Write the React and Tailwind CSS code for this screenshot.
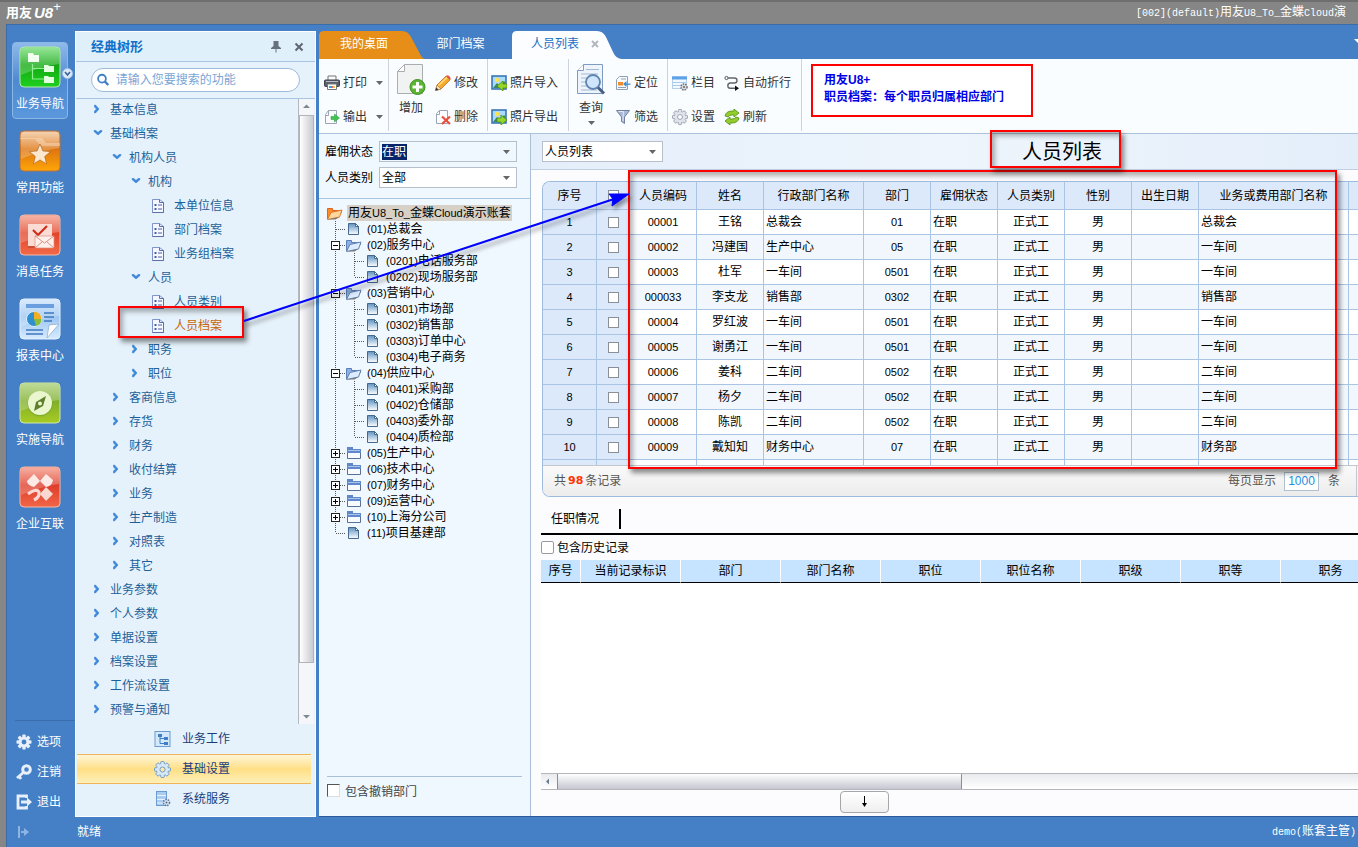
import { useState } from 'react';
import clsx from 'clsx';

const MENU = [
  { label: '基本信息', level: 0 },
  { label: '基础档案', level: 0, open: true },
  { label: '机构人员', level: 1, open: true },
  { label: '机构', level: 2, open: true },
  { label: '本单位信息', level: 3 },
  { label: '部门档案', level: 3 },
  { label: '业务组档案', level: 3 },
  { label: '人员', level: 2, open: true },
  { label: '人员类别', level: 3 },
  { label: '人员档案', level: 3, active: true },
  { label: '职务', level: 2 },
  { label: '职位', level: 2 },
  { label: '客商信息', level: 1 },
  { label: '存货', level: 1 },
  { label: '财务', level: 1 },
  { label: '收付结算', level: 1 },
  { label: '业务', level: 1 },
  { label: '生产制造', level: 1 },
  { label: '对照表', level: 1 },
  { label: '其它', level: 1 },
  { label: '业务参数', level: 0 },
  { label: '个人参数', level: 0 },
  { label: '单据设置', level: 0 },
  { label: '档案设置', level: 0 },
  { label: '工作流设置', level: 0 },
  { label: '预警与通知', level: 0 },
];

const MENU_INDENT = ['pl-[17px]', 'pl-[36px]', 'pl-[55px]', 'pl-[75px]'];

const DEPTS = [
  { code: '01', name: '总裁会', level: 1, icon: 'doc' },
  { code: '02', name: '服务中心', level: 1, icon: 'open' },
  { code: '0201', name: '电话服务部', level: 2, icon: 'doc' },
  { code: '0202', name: '现场服务部', level: 2, icon: 'doc', last: true },
  { code: '03', name: '营销中心', level: 1, icon: 'open' },
  { code: '0301', name: '市场部', level: 2, icon: 'doc' },
  { code: '0302', name: '销售部', level: 2, icon: 'doc' },
  { code: '0303', name: '订单中心', level: 2, icon: 'doc' },
  { code: '0304', name: '电子商务', level: 2, icon: 'doc', last: true },
  { code: '04', name: '供应中心', level: 1, icon: 'open' },
  { code: '0401', name: '采购部', level: 2, icon: 'doc' },
  { code: '0402', name: '仓储部', level: 2, icon: 'doc' },
  { code: '0403', name: '委外部', level: 2, icon: 'doc' },
  { code: '0404', name: '质检部', level: 2, icon: 'doc', last: true },
  { code: '05', name: '生产中心', level: 1, icon: 'closed' },
  { code: '06', name: '技术中心', level: 1, icon: 'closed' },
  { code: '07', name: '财务中心', level: 1, icon: 'closed' },
  { code: '09', name: '运营中心', level: 1, icon: 'closed' },
  { code: '10', name: '上海分公司', level: 1, icon: 'closed' },
  { code: '11', name: '项目基建部', level: 1, icon: 'doc', last: true },
];

const STAFF = [
  ['00001', '王铭', '总裁会', '01', '总裁会'],
  ['00002', '冯建国', '生产中心', '05', '一车间'],
  ['00003', '杜军', '一车间', '0501', '一车间'],
  ['000033', '李支龙', '销售部', '0302', '销售部'],
  ['00004', '罗红波', '一车间', '0501', '一车间'],
  ['00005', '谢勇江', '一车间', '0501', '一车间'],
  ['00006', '姜科', '二车间', '0502', '二车间'],
  ['00007', '杨夕', '二车间', '0502', '二车间'],
  ['00008', '陈凯', '二车间', '0502', '二车间'],
  ['00009', '戴知知', '财务中心', '07', '财务部'],
];

const STAFF_HEADS = ['人员编码', '姓名', '行政部门名称', '部门', '雇佣状态', '人员类别', '性别', '出生日期', '业务或费用部门名称'];
const POST_HEADS = ['当前记录标识', '部门', '部门名称', '职位', '职位名称', '职级', '职等', '职务'];

/* ---------- icons ---------- */

function Tile({ id, from, mid, to, edge, children }) {
  return (
    <svg width="42" height="42" viewBox="0 0 42 42" aria-hidden="true">
      <defs>
        <linearGradient id={id} x1="0" y1="0" x2="0" y2="1">
          <stop offset="0" stopColor={from} />
          <stop offset="0.45" stopColor={mid} />
          <stop offset="1" stopColor={to} />
        </linearGradient>
      </defs>
      <rect x="1" y="1" width="40" height="40" rx="4" fill={`url(#${id})`} stroke={edge} />
      <path d="M2 5a3 3 0 0 1 3-3h32a3 3 0 0 1 3 3v13Q24 20 2 29z" fill="#fff" opacity="0.22" />
      {children}
    </svg>
  );
}

const NAV = [
  {
    label: '业务导航',
    icon: (
      <Tile id="tGreen" from="#7be07b" mid="#12a812" to="#1fd01f" edge="#b5e8b0">
        <path d="M13.500 18v15h12M13.500 22.500h12" fill="none" stroke="#8ff08f" strokeWidth="1.200" />
        <path d="M9 7h5l1 2h5v7H9z" fill="#f2fff0" />
        <path d="M25 19h4l1 1h5v6H25zM25 30h4l1 1h5v6H25z" fill="#e4ffe0" />
      </Tile>
    ),
  },
  {
    label: '常用功能',
    icon: (
      <Tile id="tOrange" from="#f3c9a0" mid="#dd7410" to="#ffa608" edge="#b8703a">
        <path d="M1 9h15l4 5 4 2h17v-3H27l-4-5H1z" fill="#f8dcbc" opacity="0.500" />
        <path d="M21 14l2.900 7 7.600.6-5.800 4.900 1.800 7.400L21 29.900l-6.500 4 1.800-7.400-5.800-4.900 7.600-.6z" fill="#fde8cf" stroke="#a85c14" strokeWidth="0.600" />
      </Tile>
    ),
  },
  {
    label: '消息任务',
    icon: (
      <Tile id="tRed1" from="#f5a28f" mid="#e2452a" to="#f26a48" edge="#f3b8a8">
        <path d="M9 10h24v22H9z" fill="#fbdcd5" />
        <path d="M9 33h8" stroke="#b23c28" />
        <path d="M14 16l5 5 9-9" fill="none" stroke="#cf2d1c" strokeWidth="2.200" />
        <path d="M16 22h19v12H16z" fill="#fff0ec" stroke="#d98c7e" strokeWidth="0.700" />
        <path d="M16 22l9.500 7 9.500-7M16 34l7-6M35 34l-7-6" fill="none" stroke="#d07868" strokeWidth="0.800" />
      </Tile>
    ),
  },
  {
    label: '报表中心',
    icon: (
      <Tile id="tBlue" from="#cfe4fb" mid="#9cc6f2" to="#d7ebff" edge="#e6f2ff">
        <path d="M7 8h28" stroke="#6a9ede" strokeWidth="4" />
        <path d="M25 15h10M25 19h10M25 23h8M7 32h17M7 36h17" stroke="#3f78bd" strokeWidth="1.500" />
        <circle cx="15" cy="21" r="7.500" fill="#2f8fd0" stroke="#dceeff" />
        <path d="M15 21v-7.500a7.500 7.500 0 0 1 7.500 7.500z" fill="#f3ae24" />
        <path d="M15 21h7.500a7.500 7.500 0 0 1-5.500 7z" fill="#8cbf37" />
        <path d="M28 40l2-13 10-1z" fill="#fff" stroke="#88a7cc" strokeWidth="0.700" />
      </Tile>
    ),
  },
  {
    label: '实施导航',
    icon: (
      <Tile id="tLime" from="#aed27c" mid="#7fae2c" to="#a8cc22" edge="#d0e6a8">
        <circle cx="21" cy="22" r="12.500" fill="#6d9a2b" opacity="0.500" />
        <circle cx="21" cy="21" r="12" fill="#eaf6cd" />
        <path d="M27 14l-3 10-9 5 2-9z" fill="#5c7f2c" />
        <circle cx="21" cy="21.500" r="2" fill="#eaf6cd" />
      </Tile>
    ),
  },
  {
    label: '企业互联',
    icon: (
      <Tile id="tRed2" from="#f59a88" mid="#dd3d2a" to="#f26647" edge="#f3b8a8">
        <path d="M15 8l6 7-6 6q-7-2-7-6zM27 8l7 6q-1 6-7 7l-6-6z" fill="#fde9e5" />
        <path d="M27 21l7 7-7 7-6-7z" fill="#fbd9d3" />
        <path d="M9 28q8-6 11-2 1 5-5 8" fill="none" stroke="#fbd9d3" strokeWidth="3.200" />
      </Tile>
    ),
  },
];

function Chevron({ open }) {
  return (
    <svg width="10" height="12" viewBox="0 0 10 12" aria-hidden="true">
      {open
        ? <path d="M1 2.500h2l2 2 2-2h2v1L5 7 1 3.500z" fill="#3a86d8" stroke="#3a86d8" strokeWidth="0.600" />
        : <path d="M1.500 1v2l2 2-2 2v2h1l3.500-4L2.500 1z" fill="#3a86d8" stroke="#3a86d8" strokeWidth="0.600" />}
    </svg>
  );
}

function MenuDoc() {
  return (
    <svg width="14" height="16" viewBox="0 0 14 16" aria-hidden="true">
      <path d="M1.500 1.500h7l4 3v10h-11z" fill="#f4f7ff" stroke="#7f95cb" />
      <path d="M8.500 1.500v3h4v10h-11" fill="none" stroke="#5a6fae" />
      <path d="M3.500 6h2v2h-2zM3.500 10h2v2h-2z" fill="#4d62a3" />
      <path d="M7 7h4M7 11h4" stroke="#4d62a3" />
    </svg>
  );
}

function Gear({ fill, hole, stroke, size = 16 }) {
  return (
    <svg width={size} height={size} viewBox="0 0 16 16" aria-hidden="true">
      <g fill={fill} stroke={stroke} strokeWidth="0.800">
        {[0, 45, 90, 135].map((a) => (
          <rect key={a} x="6.300" y="0.500" width="3.400" height="15" rx="0.800" transform={`rotate(${a} 8 8)`} />
        ))}
      </g>
      <circle cx="8" cy="8" r="5.300" fill={fill} />
      <circle cx="8" cy="8" r="2.400" fill={hole} stroke={stroke} strokeWidth="0.800" />
    </svg>
  );
}

function Caret({ className }) {
  return (
    <svg className={className} width="7" height="4" viewBox="0 0 7 4" aria-hidden="true">
      <path d="M0 0h7L3.500 4z" fill="#666" />
    </svg>
  );
}

function DeptIcon({ kind }) {
  if (kind === 'doc') {
    return (
      <svg width="15" height="14" viewBox="0 0 15 14" aria-hidden="true">
        <defs>
          <linearGradient id="docFill" x1="0" y1="0" x2="0" y2="1">
            <stop offset="0" stopColor="#5f92c0" />
            <stop offset="1" stopColor="#fff" />
          </linearGradient>
        </defs>
        <path d="M3.500 1.500h7l3 3v8h-10z" fill="url(#docFill)" stroke="#45688f" />
        <path d="M10.500 1.500v3h3z" fill="#fff" stroke="#45688f" />
      </svg>
    );
  }
  if (kind === 'closed') {
    return (
      <svg width="17" height="14" viewBox="0 0 17 14" aria-hidden="true">
        <path d="M2.500 12.500v-11h5v2h8v9z" fill="#f7fbff" stroke="#5a7099" />
        <path d="M2 1h6v2h8v4H2z" fill="#5f88cc" />
        <path d="M3 4.500h12" stroke="#a9c3ea" />
      </svg>
    );
  }
  const root = kind === 'root';
  return (
    <svg width="17" height="15" viewBox="0 0 17 15" aria-hidden="true">
      <path d="M1.500 13V2.500h5v2h9V7" fill={root ? '#ff8a28' : '#8cb0e4'} stroke={root ? '#e0641c' : '#5c7fb8'} />
      <path d="M1.500 13.500L5 6.500l11-2.500-2.500 7z" fill={root ? '#ffd8a0' : '#dcebff'} stroke={root ? '#e07a2c' : '#6485b4'} />
      <path d="M1.500 13.500l12-2.500-4 2.500z" fill="#777" />
    </svg>
  );
}

/* vertical + horizontal dotted guide, optionally with a +/- box */
function Guide({ branch = true, down = true, box }) {
  return (
    <svg width="19" height="16" viewBox="0 0 19 16" shapeRendering="crispEdges" aria-hidden="true">
      <path d={down ? 'M9.500 0v16' : 'M9.500 0v8'} stroke="#555" strokeDasharray="1 1" />
      {branch && <path d="M9.500 8.500H19" stroke="#555" strokeDasharray="1 1" />}
      {box && (
        <>
          <rect x="5.500" y="4.500" width="8" height="8" fill="#fff" stroke="#222" />
          <path d={box === 'plus' ? 'M7 8.500h5M9.500 6v5' : 'M7 8.500h5'} stroke="#000" />
        </>
      )}
    </svg>
  );
}

const TOOL_ICONS = {
  print: (
    <>
      <path d="M4 1h8v5H4z" fill="#fafafa" stroke="#777" />
      <rect x="0.500" y="5" width="15" height="6.500" rx="1" fill="#59606c" stroke="#3c424c" />
      <path d="M2 6.500h12" stroke="#b8bec8" />
      <path d="M3.500 9h9v5.500h-9z" fill="#fff" stroke="#777" />
      <path d="M5 12h2" stroke="#29a8e8" strokeWidth="2" />
      <path d="M7 12h2" stroke="#e86060" strokeWidth="2" />
      <path d="M9 12h2" stroke="#e8c840" strokeWidth="2" />
    </>
  ),
  output: (
    <>
      <path d="M1.500 5.500l3-4h8v13h-11z" fill="#fafbfd" stroke="#9ba5b5" />
      <path d="M1.500 6.500h3v-5" fill="none" stroke="#9ba5b5" />
      <path d="M7 7.500h3.500V5l5 4-5 4v-2.500H7z" fill="#3fc452" stroke="#299a3c" strokeWidth="0.500" />
    </>
  ),
  edit: (
    <>
      <path d="M0.500 15.500l1.500-5.500L11 1l4 4-9 9z" fill="#f7a82d" stroke="#b9741c" strokeWidth="0.800" />
      <path d="M3.500 10.500l8.500-8" stroke="#ffe07a" strokeWidth="1.600" />
      <path d="M11 1l1-.8q3 .3 3.800 3.800L15 5z" fill="#e2564a" />
      <path d="M0.500 15.500L2 10l4 4z" fill="#f8e2c0" stroke="#8c6a40" strokeWidth="0.500" />
      <path d="M0.500 15.500l.8-3 2.200 2.200z" fill="#333" />
    </>
  ),
  remove: (
    <>
      <path d="M1.500 4.500l3-3h8v13h-11z" fill="#fbfdff" stroke="#9ba5b5" />
      <path d="M1.500 5.500h3v-4" fill="none" stroke="#9ba5b5" />
      <path d="M7 7.500l8 7.500M15 7.500L7 15" stroke="#e8503c" strokeWidth="2.200" />
    </>
  ),
  photoIn: (
    <>
      <rect x="1" y="1" width="14" height="13" fill="#a9dbff" stroke="#2f6fb0" strokeWidth="1.500" />
      <circle cx="6" cy="5" r="2.200" fill="#ffe14a" />
      <path d="M2 13l4-5 3 3 4-5 1 1v6z" fill="#3c8a5a" />
      <path d="M16 9h-4V6L6 11l6 5v-3h4z" fill="#96d629" stroke="#4d8d10" strokeWidth="0.800" />
    </>
  ),
  photoOut: (
    <>
      <rect x="1" y="1" width="14" height="13" fill="#a9dbff" stroke="#2f6fb0" strokeWidth="1.500" />
      <circle cx="6" cy="5" r="2.200" fill="#ffe14a" />
      <path d="M2 13l4-5 3 3 4-5 1 1v6z" fill="#3c8a5a" />
      <path d="M6 9h4V6l6 5-6 5v-3H6z" fill="#96d629" stroke="#4d8d10" strokeWidth="0.800" />
    </>
  ),
  locate: (
    <>
      <path d="M1.500 4.500l3-3h8v13h-11z" fill="#f7fbff" stroke="#8ca0b8" />
      <path d="M6 4h5M3 12.500h8" stroke="#8ca0b8" />
      <path d="M3 7h5v3.500H3z" fill="#f08c2a" />
      <path d="M15.500 8.500h-4V6L8 9l3.500 3V9.800h4z" fill="#3b8fd0" />
    </>
  ),
  filter: (
    <>
      <path d="M1.500 1.500h13L9.500 8v6.500l-3-2V8z" fill="#aab8d8" stroke="#71809e" />
      <path d="M3.500 2.500h5L8 8v4" fill="none" stroke="#e2e9f6" />
    </>
  ),
  column: (
    <>
      <rect x="0.500" y="1.500" width="14" height="12" fill="#f2f8ff" stroke="#b6d0ec" />
      <path d="M0 3h15" stroke="#5ba3e6" strokeWidth="3" />
      <path d="M1 7.500h13M1 10.500h13" stroke="#a8cbee" />
      <circle cx="12" cy="12" r="3" fill="#ddd" stroke="#6c6c78" strokeDasharray="1.500 1" strokeWidth="1.500" />
      <circle cx="12" cy="12" r="1" fill="#666" />
    </>
  ),
  wrap: (
    <>
      <circle cx="2.500" cy="3" r="1.600" fill="none" stroke="#555" />
      <path d="M4 3h6.500a2.500 2.500 0 0 1 0 5H6a2.700 2.700 0 0 0 0 5.300h6" fill="none" stroke="#666" strokeWidth="1.400" />
      <path d="M11 10.500l4 2.800-4 2.700z" fill="#111" />
    </>
  ),
  refresh: (
    <>
      <path d="M1 7q1-5 7-5h2V0l5 4-5 4V6H8q-3 0-4 2z" fill="#93cc2b" stroke="#4f8e14" strokeWidth="0.800" />
      <path d="M15 9q-1 5-7 5H6v2l-5-4 5-4v2h2q3 0 4-2z" fill="#93cc2b" stroke="#4f8e14" strokeWidth="0.800" />
    </>
  ),
};

function ToolButton({ icon, label, caret }) {
  return (
    <button type="button" className="flex h-6 items-center gap-[3px] whitespace-nowrap">
      {icon === 'gear'
        ? <Gear fill="#dfe3ec" hole="#fff" stroke="#8a909e" />
        : <svg width="16" height="16" viewBox="0 0 16 16" aria-hidden="true">{TOOL_ICONS[icon]}</svg>}
      {label}
      {caret && <Caret className="ml-[6px]" />}
    </button>
  );
}

function ToolGroup({ className, children }) {
  return (
    <div className={clsx('flex shrink-0 border-r border-[#cdd3db] pt-[12px]', className)}>{children}</div>
  );
}

function ToolColumn({ children }) {
  return <div className="flex flex-col items-start gap-[10px]">{children}</div>;
}

/* Latin runs are set a size smaller beside the Chinese text */
function Mono({ children }) {
  return <span className="font-['Liberation_Mono',monospace] text-[10px]">{children}</span>;
}

/* ---------- page parts ---------- */

function NavRail() {
  const links = [
    ['选项', <Gear key="g" fill="#e6effa" hole="#4580c6" stroke="none" />],
    ['注销', (
      <svg key="k" width="16" height="16" viewBox="0 0 16 16" aria-hidden="true">
        <path d="M8 8l-7 6M3 12l2 3" stroke="#e6effa" strokeWidth="2.800" />
        <circle cx="10.500" cy="5.500" r="3.800" fill="none" stroke="#e6effa" strokeWidth="3" />
      </svg>
    )],
    ['退出', (
      <svg key="e" width="16" height="16" viewBox="0 0 16 16" aria-hidden="true">
        <path d="M10.500 4V2H2v12h8.500v-2" fill="none" stroke="#e6effa" strokeWidth="2.800" />
        <path d="M5 6.500h6V3.500l5 4.500-5 4.500v-3H5z" fill="#e6effa" />
      </svg>
    )],
  ];
  return (
    <nav className="flex w-[68px] shrink-0 flex-col text-white">
      <div className="flex flex-col items-start gap-[7px] pt-[11px] pl-[5px]">
        {NAV.map((item, i) => (
          <button
            key={item.label}
            type="button"
            className={clsx(
              'relative flex h-[77px] w-[56px] flex-col items-center rounded border pt-[3px]',
              i === 0 ? 'border-[#8ab6e8] bg-linear-to-b from-[#8fbaea] via-[#4f8ad0] to-[#5a97dc]' : 'border-transparent',
            )}
          >
            {item.icon}
            <span className="mt-[8px] whitespace-nowrap leading-4">{item.label}</span>
            {i === 0 && (
              <svg className="absolute top-[25px] -right-[6px]" width="11" height="11" viewBox="0 0 11 11" aria-hidden="true">
                <circle cx="5.500" cy="5.500" r="5" fill="#dcebfa" stroke="#9dbbe0" />
                <path d="M3 4l2.500 3L8 4" fill="none" stroke="#35629c" strokeWidth="1.600" />
              </svg>
            )}
          </button>
        ))}
      </div>
      <div className="mt-auto ml-[8px] border-t border-[#3a6dad] pt-[6px]">
        {links.map(([label, icon]) => (
          <button key={label} type="button" className="flex h-[30px] items-center gap-[5px] pl-px">
            {icon}
            {label}
          </button>
        ))}
      </div>
    </nav>
  );
}

function MenuPanel() {
  return (
    <aside className="flex w-[241px] shrink-0 flex-col border border-white bg-[#e6f2fb] text-[#1d5f98]">
      <div className="flex h-[30px] shrink-0 items-center border-b border-[#a9c3e0] bg-[#e0f0fb] pr-[11px] pl-[15px]">
        <h2 className="flex-1 text-[13px] font-bold text-[#1270c8]">经典树形</h2>
        <button type="button" aria-label="固定">
          <svg width="12" height="12" viewBox="0 0 12 12" aria-hidden="true">
            <path d="M3.500 0h5v5l2.500 2v1H1V7l2.500-2zM5.500 8h1v3.500h-1z" fill="#66707e" />
          </svg>
        </button>
        <button type="button" aria-label="关闭" className="ml-[12px]">
          <svg width="10" height="10" viewBox="0 0 10 10" aria-hidden="true">
            <path d="M1.500 1.500l7 7M8.500 1.500l-7 7" stroke="#5d6672" strokeWidth="2" />
          </svg>
        </button>
      </div>
      <div className="shrink-0 border-b border-[#a9c3e0] py-[6px] pr-[15px] pl-[15px]">
        <label className="flex h-6 items-center gap-[6px] rounded-full border border-[#9db9dc] bg-white px-[5px]">
          <svg width="14" height="14" viewBox="0 0 14 14" aria-hidden="true">
            <circle cx="5.500" cy="5.500" r="4.300" fill="none" stroke="#3f7fc8" strokeWidth="2" />
            <path d="M8.500 8.500l4 4" stroke="#3f7fc8" strokeWidth="2.600" />
          </svg>
          <input
            type="search"
            aria-label="搜索"
            placeholder="请输入您要搜索的功能"
            className="w-full min-w-0 outline-none placeholder:text-[#7aa5d6]"
          />
        </label>
      </div>
      <div className="flex min-h-0 flex-1">
        <ul className="min-w-0 flex-1 overflow-hidden">
          {MENU.map((item) => (
            <li key={item.label + item.level}>
              <a
                href="#menu"
                className={clsx(
                  'flex h-6 items-center pb-[3px]',
                  MENU_INDENT[item.level],
                  item.level === 3 ? 'gap-[9px]' : 'gap-[7px]',
                  item.active && 'text-[#c8640a]',
                )}
              >
                {item.level === 3 ? <MenuDoc /> : <Chevron open={item.open} />}
                {item.label}
              </a>
            </li>
          ))}
        </ul>
        <div className="mr-px flex w-[16px] flex-col border-l border-[#b4b8c0] bg-[#f4f6f9]" aria-hidden="true">
          <svg width="15" height="16" viewBox="0 0 15 16"><path d="M4 9h7L7.500 5.500z" fill="#7d8794" /></svg>
          <div className="h-[548px] border border-[#b0b3ba] bg-linear-to-r from-white to-[#c9cad3]" />
          <svg className="mt-auto" width="15" height="16" viewBox="0 0 15 16"><path d="M4 7h7l-3.500 3.500z" fill="#7d8794" /></svg>
        </div>
      </div>
      <div className="shrink-0 pr-[4px] pb-[2px] pl-px text-[#1a3e7a]">
        <button type="button" className="flex h-[30px] w-full items-center gap-[11px] pl-[77px]">
          <svg width="17" height="16" viewBox="0 0 17 16" aria-hidden="true">
            <rect x="1" y="0.500" width="15" height="15" fill="#d4e8fb" stroke="#6b9bd0" />
            <path d="M4 3h4v3H4zM10 6h4v3h-4zM10 11h4v3h-4z" fill="#3d7fc8" />
            <path d="M6 6v6.500h4M6 7.500h4" fill="none" stroke="#3d7fc8" />
          </svg>
          业务工作
        </button>
        <button
          type="button"
          className="flex h-[30px] w-full items-center gap-[11px] border-y border-[#f0b558] bg-linear-to-b from-[#fff6d8] via-[#ffdf85] to-[#fff0b8] pl-[77px]"
        >
          <Gear size={17} fill="#d6e9f8" hole="#ffe9a8" stroke="#5c8fc4" />
          基础设置
        </button>
        <button type="button" className="flex h-[30px] w-full items-center gap-[11px] pl-[77px]">
          <svg width="17" height="16" viewBox="0 0 17 16" aria-hidden="true">
            <rect x="2.500" y="0.500" width="10" height="14" fill="#a9cdf0" stroke="#6b9bd0" />
            <path d="M3 4.500h9M3 8.500h9M3 12h9" stroke="#e8f4ff" />
            <circle cx="12.500" cy="11.500" r="3" fill="#e3eef8" stroke="#60779c" strokeDasharray="1.500 1" strokeWidth="1.600" />
            <circle cx="12.500" cy="11.500" r="1" fill="#4a5f88" />
          </svg>
          系统服务
        </button>
      </div>
    </aside>
  );
}

function TabBar() {
  return (
    <div className="flex h-[28px] shrink-0" role="tablist">
      <button type="button" role="tab" className="relative w-[106px] pr-[16px] pb-[3px] text-white">
        <svg className="absolute inset-0" width="106" height="28" viewBox="0 0 106 28" aria-hidden="true">
          <path d="M0 28V5q0-5 5-5h78q6 0 9 6l8 15q3 7 6 7z" fill="#e68e17" />
        </svg>
        <span className="relative">我的桌面</span>
      </button>
      <button type="button" role="tab" className="w-[87px] pr-[16px] pb-[3px] text-white">部门档案</button>
      <div className="relative flex w-[110px] items-center gap-[12px] pb-[3px] pl-[19px] text-[#1a6fc4]">
        <svg className="absolute inset-0" width="110" height="28" viewBox="0 0 110 28" aria-hidden="true">
          <path d="M0 28V5q0-5 5-5h80q6 0 9 6l7 15q3 7 9 7z" fill="#fbfdff" />
        </svg>
        <button type="button" role="tab" aria-selected="true" className="relative whitespace-nowrap">人员列表</button>
        <button type="button" aria-label="关闭标签" className="relative">
          <svg width="8" height="8" viewBox="0 0 8 8" aria-hidden="true">
            <path d="M1 1l6 6M7 1L1 7" stroke="#b3b8be" strokeWidth="2" />
          </svg>
        </button>
      </div>
      <svg className="mt-[7px] ml-auto" width="4" height="6" viewBox="0 0 4 6" aria-hidden="true">
        <path d="M0 1h8L4 5z" fill="#fff" />
      </svg>
    </div>
  );
}

function Toolbar() {
  return (
    <div className="flex h-[75px] shrink-0 overflow-hidden border-b border-[#aac2dc] bg-[#fafdff] pb-[2px] text-[#333]">
      <ToolGroup className="w-[70px] pl-[5px]">
        <ToolColumn>
          <ToolButton icon="print" label="打印" caret />
          <ToolButton icon="output" label="输出" caret />
        </ToolColumn>
      </ToolGroup>
      <ToolGroup className="w-[99px] pl-[6px]">
        <button type="button" className="-mt-[8px] flex w-[32px] flex-col items-center self-start">
          <svg width="30" height="33" viewBox="0 0 30 33" aria-hidden="true">
            <path d="M1.500 8.500l7-7h18v29h-25z" fill="#f0f3f1" stroke="#a9aeb0" />
            <path d="M1.500 8.500h7v-7z" fill="#fff" stroke="#a9aeb0" />
            <circle cx="21.500" cy="24" r="7.500" fill="#5cb531" stroke="#3f8f20" />
            <path d="M21.500 19v10M16.500 24h10" stroke="#fff" strokeWidth="3" />
          </svg>
          <span className="mt-[4px] whitespace-nowrap leading-4">增加</span>
        </button>
        <div className="pl-[8px]">
          <ToolColumn>
            <ToolButton icon="edit" label="修改" />
            <ToolButton icon="remove" label="删除" />
          </ToolColumn>
        </div>
      </ToolGroup>
      <ToolGroup className="w-[81px] pl-[3px]">
        <ToolColumn>
          <ToolButton icon="photoIn" label="照片导入" />
          <ToolButton icon="photoOut" label="照片导出" />
        </ToolColumn>
      </ToolGroup>
      <ToolGroup className="w-[99px] pl-[6px]">
        <button type="button" className="-mt-[8px] flex w-[32px] flex-col items-center self-start">
          <svg width="30" height="33" viewBox="0 0 30 33" aria-hidden="true">
            <path d="M1.500 7.500l6-6h19v29h-25z" fill="#eef4fb" stroke="#7f9cc0" />
            <path d="M1.500 7.500h6v-6" fill="#fff" stroke="#7f9cc0" />
            <path d="M10 6.500h13M5 11h17M5 15h6M5 19h5M5 23h6M5 27h16" stroke="#a3b9d4" />
            <circle cx="17" cy="19" r="7" fill="#cfe6fa" stroke="#5f84b2" strokeWidth="1.800" />
            <path d="M22 24.500l6 6" stroke="#4a5f86" strokeWidth="3" />
          </svg>
          <span className="mt-[4px] whitespace-nowrap leading-4">查询</span>
          <Caret className="mt-[5px]" />
        </button>
        <div className="pl-[8px]">
          <ToolColumn>
            <ToolButton icon="locate" label="定位" />
            <ToolButton icon="filter" label="筛选" />
          </ToolColumn>
        </div>
      </ToolGroup>
      <ToolGroup className="w-[134px] gap-[9px] pl-[4px]">
        <ToolColumn>
          <ToolButton icon="column" label="栏目" />
          <ToolButton icon="gear" label="设置" />
        </ToolColumn>
        <ToolColumn>
          <ToolButton icon="wrap" label="自动折行" />
          <ToolButton icon="refresh" label="刷新" />
        </ToolColumn>
      </ToolGroup>
      <p className="mt-[5px] ml-[9px] h-[53px] w-[222px] shrink-0 border-2 border-[#f00] bg-white pt-[6px] pl-[11px] font-bold leading-[17px] whitespace-nowrap text-[#0000e6]">
        用友U8+
        <br />
        职员档案：每个职员归属相应部门
      </p>
    </div>
  );
}

function DeptPanel() {
  return (
    <section className="flex w-[212px] shrink-0 flex-col border-r border-[#a9c0d8] bg-[#eff7ff]">
      <div className="flex shrink-0 flex-col gap-[5px] border-b border-[#a9c6e0] pt-[7px] pb-[10px] pl-[6px]">
        <label className="flex h-[21px] items-center gap-[6px]">
          雇佣状态
          <span className="flex h-[21px] w-[138px] items-center justify-between border border-[#b6bfca] bg-[#eff7ff] pr-[6px] pl-[2px]">
            <select className="w-[25px] appearance-none bg-[#0a246a] text-white outline-none" defaultValue="在职">
              <option>在职</option>
            </select>
            <Caret />
          </span>
        </label>
        <label className="flex h-[21px] items-center gap-[6px]">
          人员类别
          <span className="flex h-[21px] w-[138px] items-center border border-[#b6bfca] bg-white pr-[6px] pl-[2px]">
            <select className="flex-1 appearance-none outline-none" defaultValue="全部">
              <option>全部</option>
            </select>
            <Caret />
          </span>
        </label>
      </div>
      <div className="min-h-0 flex-1 overflow-hidden pt-[6px] pl-[7px]">
        <div className="flex h-4 items-center">
          <span className="w-[21px]"><DeptIcon kind="root" /></span>
          <span className="bg-[#d6d0c6] pr-px pl-px leading-4 whitespace-nowrap">
            用友<span className="text-[11px]">U8_To_</span>金蝶<span className="text-[11px]">Cloud</span>演示账套
          </span>
        </div>
        <ul>
          {DEPTS.map((d) => (
            <li key={d.code} className="flex h-4 items-center whitespace-nowrap">
              {d.level === 2 && <Guide branch={false} />}
              <Guide
                down={!d.last}
                box={d.icon === 'open' ? 'minus' : d.icon === 'closed' ? 'plus' : undefined}
              />
              <span className="w-[22px]"><DeptIcon kind={d.icon} /></span>
              <span className="text-[11px]">({d.code})</span>
              {d.name}
            </li>
          ))}
        </ul>
      </div>
      <label className="mx-[8px] flex h-[40px] shrink-0 items-start gap-[5px] border-t border-[#a9c0d8] pt-[7px] leading-4 text-[#444]">
        <input type="checkbox" className="size-[13px] appearance-none border border-[#ddd] border-t-[#555] border-l-[#555] bg-white" />
        包含撤销部门
      </label>
    </section>
  );
}

function StaffGrid() {
  const [checked, setChecked] = useState([]);
  const toggle = (code) => setChecked(checked.includes(code) ? checked.filter((c) => c !== code) : [...checked, code]);
  const box = 'block mx-auto size-[11px] appearance-none border border-[#8a8f98] bg-white checked:bg-[#3a86d8]';
  const cell = 'border-r border-b border-[#aac4e4]';
  return (
    <div className="mt-[11px] ml-[11px] shrink-0 overflow-hidden rounded-l-lg border border-r-0 border-[#9dbbdc]">
      <table className="w-full table-fixed border-separate border-spacing-0">
        <colgroup>
          <col className="w-[54px]" />
          <col className="w-[33px]" />
          <col className="w-[67px]" />
          <col className="w-[67px]" />
          <col className="w-[100px]" />
          <col className="w-[67px]" />
          <col className="w-[67px]" />
          <col className="w-[67px]" />
          <col className="w-[67px]" />
          <col className="w-[67px]" />
          <col className="w-[150px]" />
          <col />
        </colgroup>
        <thead>
          <tr className="h-[28px] bg-[#dce9fb]">
            <th className={clsx(cell, 'font-normal')}>序号</th>
            <th className={cell}><input type="checkbox" aria-label="全选" className={box} /></th>
            {STAFF_HEADS.map((h) => (
              <th key={h} className={clsx(cell, 'font-normal whitespace-nowrap')}>{h}</th>
            ))}
            <th className="border-b border-[#aac4e4]" />
          </tr>
        </thead>
        <tbody>
          {STAFF.map(([code, name, dept, deptNo, costDept], i) => (
            <tr key={code} className={clsx('h-[25px] text-center', i % 2 ? 'bg-[#f2f7fe]' : 'bg-white')}>
              <td className={clsx(cell, 'bg-[#dce9fb] text-[11px]')}>{i + 1}</td>
              <td className={clsx(cell, 'bg-[#dce9fb]')}>
                <input
                  type="checkbox"
                  aria-label={name}
                  checked={checked.includes(code)}
                  onChange={() => toggle(code)}
                  className={box}
                />
              </td>
              <td className={clsx(cell, 'text-[11px]')}>{code}</td>
              <td className={cell}>{name}</td>
              <td className={clsx(cell, 'pl-[2px] text-left')}>{dept}</td>
              <td className={clsx(cell, 'text-[11px]')}>{deptNo}</td>
              <td className={clsx(cell, 'pl-[2px] text-left')}>在职</td>
              <td className={cell}>正式工</td>
              <td className={cell}>男</td>
              <td className={cell} />
              <td className={clsx(cell, 'pl-[2px] text-left')}>{costDept}</td>
              <td className="border-b border-[#aac4e4]" />
            </tr>
          ))}
          <tr className="h-[5px] bg-white">
            <td className="border-r border-[#aac4e4] bg-[#dce9fb]" />
            <td className="border-r border-[#aac4e4] bg-[#dce9fb]" />
            {STAFF_HEADS.map((h) => <td key={h} className="border-r border-[#aac4e4]" />)}
            <td />
          </tr>
        </tbody>
      </table>
      <div className="flex h-[31px] items-center border-t border-[#c4c8ce] bg-linear-to-b from-[#fafafa] to-[#ececec] pl-[11px] text-[#555]">
        共<b className="px-[2px] font-['DejaVu_Sans',sans-serif] text-[11px] text-[#ff3300]">98</b>条记录
        <label className="ml-auto flex items-center gap-2">
          每页显示
          <input type="text" defaultValue="1000" className="h-[19px] w-[35px] border border-[#b0c0d0] bg-white text-center text-[#1a8fe0]" />
        </label>
        <span className="mr-[16px] ml-[9px]">条</span>
        <span className="mr-px h-full border-r border-[#c4c8ce]" />
      </div>
    </div>
  );
}

function PostPanel() {
  return (
    <div className="ml-[10px] flex min-h-0 flex-1 flex-col pt-[12px]">
      <div className="flex h-[26px] shrink-0 items-start border-b-2 border-black">
        <button type="button" className="h-[20px] w-[80px] border-r-2 border-black pr-[20px] pl-[10px] text-left whitespace-nowrap">任职情况</button>
      </div>
      <label className="flex h-[25px] shrink-0 items-center gap-[3px]">
        <input type="checkbox" className="size-[13px] appearance-none rounded-xs border border-[#9a9a9a] bg-white" />
        包含历史记录
      </label>
      <div className="min-h-0 flex-1 overflow-hidden bg-white">
        <table className="w-full min-w-[840px] table-fixed border-separate border-spacing-0">
          <thead>
            <tr className="h-[23px] bg-[#c6e3ff]">
              <th className="w-[40px] border-r border-b border-r-white border-b-black font-normal">序号</th>
              {POST_HEADS.map((h) => (
                <th key={h} className="w-[100px] border-r border-b border-r-white border-b-black font-normal">{h}</th>
              ))}
            </tr>
          </thead>
        </table>
      </div>
      <div className="flex h-[17px] shrink-0 border-y border-[#b4b6bc] bg-linear-to-b from-[#e8eaee] to-white" aria-hidden="true">
        <svg width="16" height="15" viewBox="0 0 16 15"><path d="M8 4.500v6l-3-3z" fill="#6b7b90" /></svg>
        <div className="w-[405px] border-x border-[#8d8f98] bg-linear-to-b from-white to-[#c5c6d0]" />
      </div>
      <div className="flex h-[26px] shrink-0 items-start pt-px pl-[299px]">
        <button type="button" aria-label="展开" className="flex h-[22px] w-[49px] items-center justify-center rounded border border-[#a4a6aa] bg-linear-to-b from-white to-[#efefef]">
          <svg width="7" height="12" viewBox="0 0 7 12" aria-hidden="true">
            <path d="M3.500 0v10" stroke="#000" />
            <path d="M1 7h5l-2.500 4z" fill="#000" />
          </svg>
        </button>
      </div>
    </div>
  );
}

/* callouts that float over the window */
function Callouts() {
  const frame = 'absolute border-2 border-[#f00] shadow-[3px_4px_5px_rgba(0,0,0,0.45),inset_3px_4px_5px_rgba(0,0,0,0.3)]';
  return (
    <div className="pointer-events-none absolute inset-0">
      <div className={clsx(frame, 'top-[306px] left-[118px] h-[32px] w-[126px]')} />
      <div className={clsx(frame, 'top-[170px] left-[628px] h-[299px] w-[709px]')} />
      <div className={clsx(frame, 'top-[130px] left-[990px] flex h-[38px] w-[131px] items-center justify-center pt-[6px] pl-[13px] text-[20px] whitespace-nowrap')}>
        人员列表
      </div>
      <svg className="absolute top-[180px] left-[240px] drop-shadow-[2px_4px_2px_rgba(0,0,0,0.4)]" width="400" height="150" viewBox="0 0 400 150" aria-hidden="true">
        <path d="M4 141L374 19" stroke="#00f" strokeWidth="2" />
        <path d="M389 14l-20 0 4 5-1 7z" fill="#00f" stroke="#00f" />
      </svg>
    </div>
  );
}

export default function App() {
  return (
    <div className="relative flex h-screen flex-col overflow-hidden bg-[#868686] font-['Liberation_Sans','Noto_Sans_CJK_SC',sans-serif] text-[12px] leading-4 text-black">
      <header className="flex h-[24px] shrink-0 items-center justify-between border-t-2 border-[#6e6e6e] pr-[12px] pl-[6px] text-white">
        <h1 className="flex items-center text-[13px] font-bold">
          用友
          <span className="ml-[2px] text-[15px] italic">U8</span>
          <sup className="text-[13px] font-normal">+</sup>
        </h1>
        <span>
          <Mono>[002](default)</Mono>用友<Mono>U8_To_</Mono>金蝶<Mono>Cloud</Mono>演
        </span>
      </header>
      <div className="ml-[6px] flex min-h-0 flex-1 flex-col border-t border-l border-[#3c6ca8] bg-[#4580c6]">
        <div className="flex min-h-0 flex-1 pt-[6px]">
          <NavRail />
          <MenuPanel />
          <main className="ml-[3px] flex min-w-0 flex-1 flex-col">
            <TabBar />
            <Toolbar />
            <div className="flex min-h-0 flex-1 border-b border-[#2c5a9c]">
              <DeptPanel />
              <section className="flex min-w-0 flex-1 flex-col bg-[#fcfcff]">
                <div className="flex h-[36px] shrink-0 items-start border-b border-[#c0d0e2] bg-linear-to-r from-[#e4eefa] via-[#eef5fc] to-[#e4eefa] pt-[7px] pl-[11px]">
                  <span className="flex h-[21px] w-[121px] items-center border border-[#b6bfca] bg-white pr-[6px] pl-[2px]">
                    <select aria-label="列表方案" className="flex-1 appearance-none outline-none" defaultValue="人员列表">
                      <option>人员列表</option>
                    </select>
                    <Caret />
                  </span>
                </div>
                <StaffGrid />
                <PostPanel />
              </section>
            </div>
          </main>
        </div>
        <footer className="flex h-[30px] shrink-0 items-center pl-[11px] text-white">
          <svg width="12" height="12" viewBox="0 0 12 12" aria-hidden="true">
            <path d="M1 0v12M3 6h4" stroke="#8db5e4" strokeWidth="2" />
            <path d="M6 2l5 4-5 4z" fill="#8db5e4" />
          </svg>
          <span className="ml-[47px]">就绪</span>
          <span className="mr-[2px] ml-auto whitespace-nowrap"><Mono>demo(</Mono>账套主管<Mono>)</Mono></span>
        </footer>
      </div>
      <Callouts />
    </div>
  );
}
